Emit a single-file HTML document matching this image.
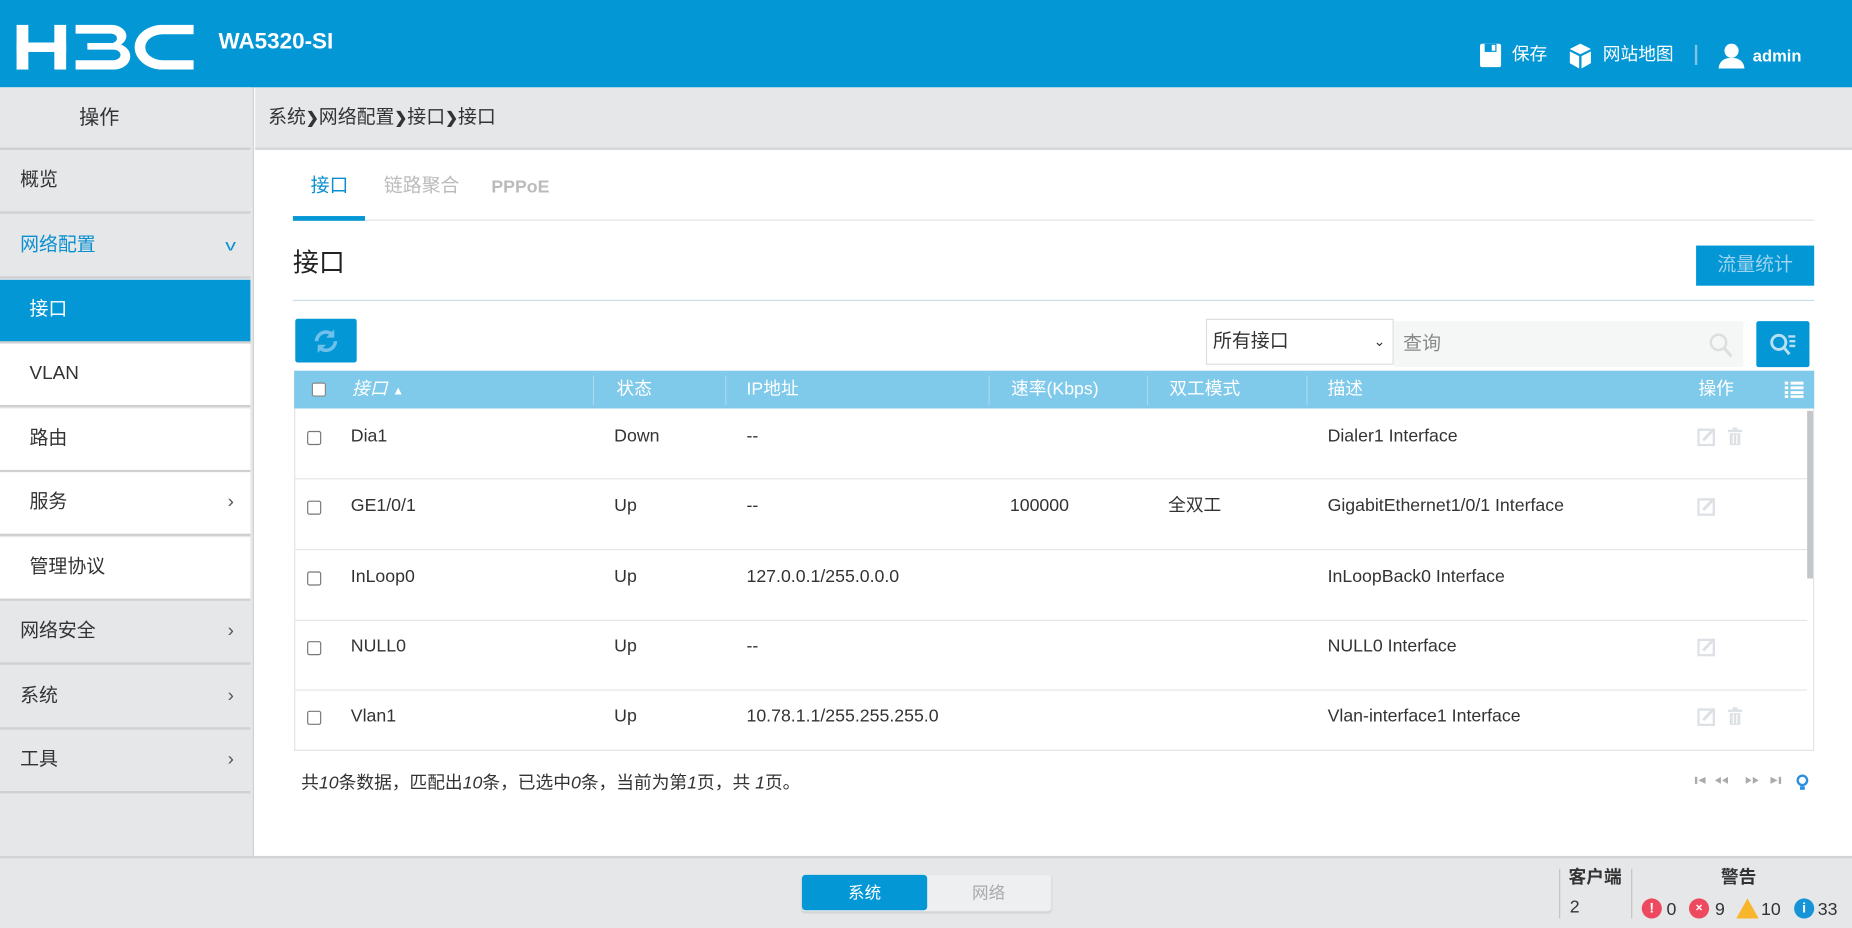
<!DOCTYPE html>
<html><head><meta charset="utf-8"><style>
*{margin:0;padding:0;box-sizing:border-box}
html,body{width:1852px;height:928px;overflow:hidden;background:#fff}
#w{width:1568px;height:786px;position:relative;transform:scale(1.18112,1.1806);transform-origin:0 0;font-family:"Liberation Sans","Noto Sans CJK SC",sans-serif;color:#333;font-size:15px}
.a{position:absolute;white-space:nowrap;line-height:18px}
.hdr{left:0;top:0;width:1568px;height:74px;background:#0397d6}
.side{left:0;top:74px;width:215px;height:652px;background:#e6e7e9;border-right:1px solid #d0d0d0}
.it{position:absolute;left:0;width:212px;height:54px;border-bottom:2px solid #cfd0d2;font-size:16px;line-height:52px}
.g{background:#e6e7e9;padding-left:17px}
.wt{background:#fff;padding-left:25px}
.chev{position:absolute;right:14px;top:0;font-size:16px;color:#555}
.th{color:#fff;font-size:15px;top:321px}
.row{left:249px;width:1281px;height:60px;border-bottom:1px solid #e6e6e6}
.cb{width:12px;height:12px;border:1px solid #777;border-radius:2px;background:#fff}
</style></head><body><div id="w">
<div class="a hdr"></div>
<svg class="a" style="left:14px;top:21px" width="150" height="38" viewBox="0 0 150 38">
<g fill="#fff">
<rect x="0" y="0" width="10" height="38"/><rect x="32" y="0" width="10" height="38"/><rect x="0" y="15" width="42" height="8"/>
<path d="M50 0H80A13 9.5 0 0 1 80 19H60V15.5H80A5 4 0 0 0 80 7.5H50Z"/>
<path d="M60 15.5H82A14 11 0 0 1 82 38H50V30H82A6 4.5 0 0 0 82 21H60Z"/>
<path d="M150 0H124A24 19 0 0 0 124 38H150V30H124A15 11 0 0 1 124 8H150Z"/>
</g></svg>
<div class="a" style="left:185px;top:27px;color:#fff;font-size:19px;font-weight:bold;">WA5320-SI</div>
<svg class="a" style="left:1253px;top:37px" width="18" height="20"><rect x="0" y="0" width="18" height="20" rx="2" fill="#fff"/><rect x="4" y="0" width="10" height="7" fill="#0397d6"/><rect x="10" y="1" width="3" height="5" fill="#fff"/></svg>
<div class="a" style="left:1280px;top:38px;color:#fff;font-size:15px">保存</div>
<svg class="a" style="left:1329px;top:37px" width="18" height="21"><path d="M9 0L18 4.5 9 9 0 4.5Z" fill="#fff"/><path d="M0 6.5L8 10.5V21L0 16.5Z M18 6.5L10 10.5V21L18 16.5Z" fill="#fff"/></svg>
<div class="a" style="left:1357px;top:38px;color:#fff;font-size:15px">网站地图</div>
<div class="a" style="left:1435px;top:38px;width:2px;height:17px;background:#7fc3e8"></div>
<svg class="a" style="left:1455px;top:37px" width="22" height="21"><circle cx="11" cy="6" r="6" fill="#fff"/><path d="M0 21Q1 12 11 12Q21 12 22 21Z" fill="#fff"/></svg>
<div class="a" style="left:1484px;top:38px;color:#fff;font-size:14px;font-weight:bold">admin</div>

<div class="a side">
<div class="it" style="top:0;height:53px;text-align:center;line-height:52px;padding-right:44px;font-size:17px;background:#e6e7e9">操作</div>
<div class="it g" style="top:53px">概览</div>
<div class="it g" style="top:108px;color:#0a8fd0">网络配置<span class="chev" style="color:#0a8fd0;font-size:13px;transform:scaleX(1.4)">v</span></div>
<div class="it" style="top:163px;background:#0397d6;color:#fff;padding-left:25px">接口</div>
<div class="it wt" style="top:217px">VLAN</div>
<div class="it wt" style="top:272px">路由</div>
<div class="it wt" style="top:326px">服务<span class="chev">›</span></div>
<div class="it wt" style="top:381px">管理协议</div>
<div class="it g" style="top:435px">网络安全<span class="chev">›</span></div>
<div class="it g" style="top:490px">系统<span class="chev">›</span></div>
<div class="it g" style="top:544px">工具<span class="chev">›</span></div>
</div>

<div class="a" style="left:216px;top:74px;width:1352px;height:53px;background:#e6e7e9;border-bottom:2px solid #d6d7d9"></div>
<div class="a" style="left:227px;top:90px;font-size:16px;line-height:20px">系统<b style="font-size:13px">❯</b>网络配置<b style="font-size:13px">❯</b>接口<b style="font-size:13px">❯</b>接口</div>

<div class="a" style="left:263px;top:149px;color:#0a8fd0;font-size:16px">接口</div>
<div class="a" style="left:325px;top:149px;color:#bbb;font-size:16px">链路聚合</div>
<div class="a" style="left:416px;top:150px;color:#bbb;font-size:15px;font-weight:bold">PPPoE</div>
<div class="a" style="left:248px;top:186px;width:1288px;height:1px;background:#e3e3e3"></div>
<div class="a" style="left:248px;top:183px;width:61px;height:4px;background:#0397d6"></div>
<div class="a" style="left:248px;top:210px;font-size:22px;line-height:26px;color:#222">接口</div>
<div class="a" style="left:1436px;top:208px;width:100px;height:34px;background:#0397d6;color:#9fd4ef;font-size:16px;text-align:center;line-height:34px">流量统计</div>
<div class="a" style="left:248px;top:254px;width:1288px;height:1px;background:#c8dcea"></div>
<div class="a" style="left:250px;top:270px;width:52px;height:37px;background:#0397d6;border-radius:2px"></div>
<svg class="a" style="left:264px;top:277px" width="24" height="24" viewBox="0 0 24 24"><path d="M4 12A8 8 0 0 1 18 7M20 12A8 8 0 0 1 6 17" stroke="#6ec0ea" stroke-width="3" fill="none"/><path d="M19 2V9H12Z M5 22V15H12Z" fill="#6ec0ea"/></svg>
<div class="a" style="left:1021px;top:270px;width:159px;height:39px;border:1px solid #ddd;background:#fff;font-size:16px;line-height:37px;padding-left:5px">所有接口<span style="position:absolute;right:6px;font-size:12px">&#8964;</span></div>
<div class="a" style="left:1180px;top:272px;width:296px;height:39px;background:#f5f6f6;color:#888;font-size:16px;line-height:39px;padding-left:8px">查询</div>
<svg class="a" style="left:1447px;top:282px" width="20" height="22"><circle cx="8" cy="8" r="6.5" stroke="#ddd" stroke-width="2" fill="none"/><path d="M13 13L19 20" stroke="#ddd" stroke-width="2.5"/></svg>
<div class="a" style="left:1487px;top:272px;width:45px;height:39px;background:#0397d6;border-radius:2px"></div>
<svg class="a" style="left:1498px;top:281px" width="24" height="22"><circle cx="8" cy="9" r="6" stroke="#b8e0f4" stroke-width="2.5" fill="none"/><path d="M12 13L17 19" stroke="#b8e0f4" stroke-width="2.5"/><path d="M16 4H22M17 8H22M17 12H22" stroke="#b8e0f4" stroke-width="2"/></svg>

<div class="a" style="left:249px;top:314px;width:1287px;height:32px;background:#7fc9ea"></div>
<div class="a cb" style="left:264px;top:324px;border-color:#888"></div>
<div class="a th" style="left:298px;font-style:italic">接口 <span style="font-size:10px;font-style:normal">▲</span></div>
<div class="a th" style="left:522px">状态</div>
<div class="a th" style="left:632px">IP地址</div>
<div class="a th" style="left:856px">速率(Kbps)</div>
<div class="a th" style="left:990px">双工模式</div>
<div class="a th" style="left:1124px">描述</div>
<div class="a th" style="left:1438px">操作</div>
<svg class="a" style="left:1511px;top:323px" width="16" height="14"><path d="M0 1.5H3M5 1.5H16M0 5.5H3M5 5.5H16M0 9.5H3M5 9.5H16M0 13H3M5 13H16" stroke="#fff" stroke-width="2.5"/></svg>
<div class="a" style="left:502px;top:318px;width:1px;height:25px;background:#a8d9ef"></div>
<div class="a" style="left:614px;top:318px;width:1px;height:25px;background:#a8d9ef"></div>
<div class="a" style="left:837px;top:318px;width:1px;height:25px;background:#a8d9ef"></div>
<div class="a" style="left:971px;top:318px;width:1px;height:25px;background:#a8d9ef"></div>
<div class="a" style="left:1106px;top:318px;width:1px;height:25px;background:#a8d9ef"></div>

<div class="a" style="left:249px;top:346px;width:1287px;height:290px;border:1px solid #e3e3e3;border-top:none"></div>
<div class="a" style="left:1530px;top:348px;width:5px;height:142px;background:#c3c7cc"></div>

<div class="a row" style="top:346px"></div>
<div class="a row" style="top:406px"></div>
<div class="a row" style="top:466px"></div>
<div class="a row" style="top:525px"></div>

<svg width="0" height="0" style="position:absolute"><defs>
<g id="ed"><rect x="1" y="2" width="13" height="13" fill="none" stroke="#dde1e5" stroke-width="2"/><path d="M5 11L14 1.5" stroke="#dde1e5" stroke-width="2.5"/></g>
<g id="tr"><rect x="0" y="2" width="12" height="2" fill="#dde1e5"/><rect x="4" y="0" width="4" height="2" fill="#dde1e5"/><path d="M1.5 5H10.5V15H1.5Z" fill="#dde1e5"/><path d="M4.5 6V14M7.5 6V14" stroke="#fff" stroke-width="1"/></g>
</defs></svg>

<div class="a cb" style="left:260px;top:365px"></div>
<div class="a" style="left:297px;top:361px">Dia1</div><div class="a" style="left:520px;top:361px">Down</div><div class="a" style="left:632px;top:361px">--</div><div class="a" style="left:1124px;top:361px">Dialer1 Interface</div>
<svg class="a" style="left:1437px;top:362px" width="40" height="16"><use href="#ed"/><use href="#tr" x="26"/></svg>

<div class="a cb" style="left:260px;top:424px"></div>
<div class="a" style="left:297px;top:420px">GE1/0/1</div><div class="a" style="left:520px;top:420px">Up</div><div class="a" style="left:632px;top:420px">--</div><div class="a" style="left:855px;top:420px">100000</div><div class="a" style="left:989px;top:420px">全双工</div><div class="a" style="left:1124px;top:420px">GigabitEthernet1/0/1 Interface</div>
<svg class="a" style="left:1437px;top:421px" width="40" height="16"><use href="#ed"/></svg>

<div class="a cb" style="left:260px;top:484px"></div>
<div class="a" style="left:297px;top:480px">InLoop0</div><div class="a" style="left:520px;top:480px">Up</div><div class="a" style="left:632px;top:480px">127.0.0.1/255.0.0.0</div><div class="a" style="left:1124px;top:480px">InLoopBack0 Interface</div>

<div class="a cb" style="left:260px;top:543px"></div>
<div class="a" style="left:297px;top:539px">NULL0</div><div class="a" style="left:520px;top:539px">Up</div><div class="a" style="left:632px;top:539px">--</div><div class="a" style="left:1124px;top:539px">NULL0 Interface</div>
<svg class="a" style="left:1437px;top:540px" width="40" height="16"><use href="#ed"/></svg>

<div class="a cb" style="left:260px;top:602px"></div>
<div class="a" style="left:297px;top:598px">Vlan1</div><div class="a" style="left:520px;top:598px">Up</div><div class="a" style="left:632px;top:598px">10.78.1.1/255.255.255.0</div><div class="a" style="left:1124px;top:598px">Vlan-interface1 Interface</div>
<svg class="a" style="left:1437px;top:599px" width="40" height="16"><use href="#ed"/><use href="#tr" x="26"/></svg>

<div class="a" style="left:255px;top:655px">共<i>10</i>条数据，匹配出<i>10</i>条，已选中<i>0</i>条，当前为第<i>1</i>页，共 <i>1</i>页。</div>
<svg class="a" style="left:1434px;top:656px" width="100" height="16">
<g fill="#aaa"><rect x="1" y="2" width="2" height="6"/><path d="M10 2V8L4 5Z"/>
<path d="M23 2V8L18 5Z M29 2V8L24 5Z"/>
<path d="M44 2V8L49 5Z M50 2V8L55 5Z"/>
<path d="M65 2V8L71 5Z"/><rect x="72" y="2" width="2" height="6"/></g>
<circle cx="92" cy="5" r="4" stroke="#2a8fe0" stroke-width="2" fill="none"/><rect x="90" y="10" width="4" height="3" fill="#2a8fe0"/></svg>

<div class="a" style="left:0;top:725px;width:1568px;height:61px;background:#e6e7e9;border-top:2px solid #d2d3d5"></div>
<div class="a" style="left:679px;top:741px;width:211px;height:31px;background:#eeeff0;border-radius:3px;box-shadow:0 1px 2px #ccc"></div>
<div class="a" style="left:679px;top:741px;width:106px;height:30px;background:#0397d6;border-radius:3px;color:#fff;font-size:14px;text-align:center;line-height:30px">系统</div>
<div class="a" style="left:823px;top:747px;color:#aaa;font-size:14px">网络</div>
<div class="a" style="left:1320px;top:736px;width:1px;height:42px;background:#c8c0c0"></div>
<div class="a" style="left:1381px;top:736px;width:1px;height:42px;background:#c8c0c0"></div>
<div class="a" style="left:1328px;top:735px;font-weight:bold;font-size:15px">客户端</div>
<div class="a" style="left:1329px;top:760px">2</div>
<div class="a" style="left:1457px;top:735px;font-weight:bold;font-size:15px">警告</div>
<div class="a" style="left:1390px;top:761px;width:17px;height:17px;border-radius:50%;background:#ee4a5f;color:#fff;font-size:12px;font-weight:bold;text-align:center;line-height:17px">!</div>
<div class="a" style="left:1411px;top:762px">0</div>
<div class="a" style="left:1430px;top:761px;width:17px;height:17px;border-radius:50%;background:#ee4a5f;color:#fff;font-size:10px;font-weight:bold;text-align:center;line-height:17px">×</div>
<div class="a" style="left:1452px;top:762px">9</div>
<svg class="a" style="left:1470px;top:761px" width="19" height="17"><path d="M9.5 0L19 17H0Z" fill="#f9b62c"/></svg>
<div class="a" style="left:1491px;top:762px">10</div>
<div class="a" style="left:1519px;top:761px;width:17px;height:17px;border-radius:50%;background:#1595d8;color:#fff;font-size:12px;font-weight:bold;text-align:center;line-height:17px">i</div>
<div class="a" style="left:1539px;top:762px">33</div>
</div></body></html>
